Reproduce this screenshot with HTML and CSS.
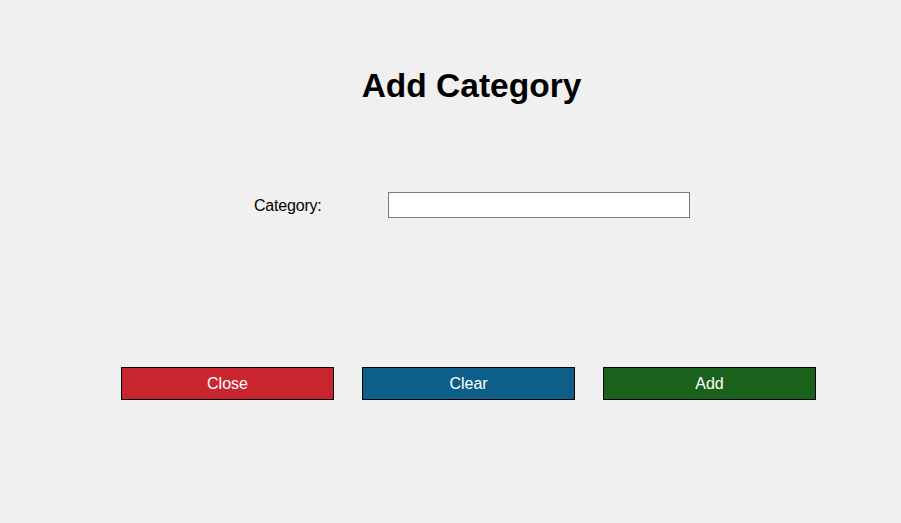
FILE: index.html
```html
<!DOCTYPE html>
<html>
<head>
<meta charset="utf-8">
<link rel="stylesheet" href="styles.css">
</head>
<body>
<div class="page">
  <h1 class="title">Add Category</h1>
  <div class="form-row">
    <label class="label" for="cat">Category:</label>
    <input class="input" id="cat" type="text">
  </div>
  <div class="buttons">
    <button class="btn btn-close">Close</button>
    <button class="btn btn-clear">Clear</button>
    <button class="btn btn-add">Add</button>
  </div>
</div>
</body>
</html>
```
FILE: styles.css
```css
html, body {
  margin: 0;
  padding: 0;
  background: #f0f0f0;
}
.page {
  width: 901px;
  height: 523px;
  font-family: "Liberation Sans", Arial, sans-serif;
  display: flex;
  flex-direction: column;
}
.title {
  margin: 66px 0 0 0;
  padding-left: 42px;
  text-align: center;
  font-size: 33.5px;
  font-weight: bold;
  line-height: 40px;
  color: #000;
}
.form-row {
  display: flex;
  align-items: center;
  margin-top: 86px;
  padding-left: 254px;
}
.label {
  width: 134px;
  padding-top: 2px;
  font-size: 16px;
  letter-spacing: -0.2px;
  color: #000;
}
.input {
  box-sizing: border-box;
  width: 302px;
  height: 26px;
  margin: 0;
  border: 1px solid #7a7a7a;
  background: #fff;
  padding: 0 4px;
  outline: none;
}
.buttons {
  display: flex;
  gap: 28px;
  margin-top: 149px;
  padding-left: 121px;
}
.btn {
  box-sizing: border-box;
  width: 213px;
  height: 33px;
  border: 1px solid #000;
  color: #fff;
  font-family: "Liberation Sans", Arial, sans-serif;
  font-size: 16px;
  padding: 0;
  margin: 0;
}
.btn-close { background: #c9252f; }
.btn-clear { background: #0d5f8a; }
.btn-add { background: #1a621b; }
```
